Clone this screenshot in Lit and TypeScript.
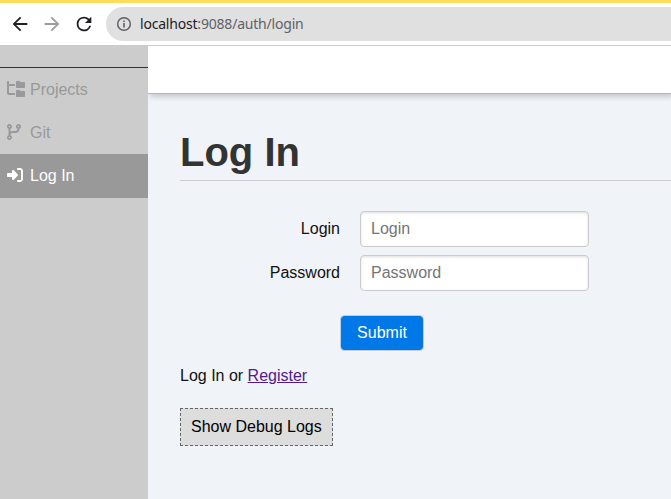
import { LitElement, html, css, svg } from "lit";
import { customElement } from "lit/decorators.js";
import { classMap } from "lit/directives/class-map.js";

const folderTree = svg`<path d="M64 32C64 14.3 49.7 0 32 0S0 14.3 0 32v96V384c0 35.3 28.7 64 64 64H256V384H64V160H256V96H64V32zM288 192c0 17.7 14.3 32 32 32H544c17.7 0 32-14.3 32-32V64c0-17.7-14.3-32-32-32H445.3c-8.5 0-16.6-3.4-22.6-9.4L409.4 9.4c-6-6-14.1-9.4-22.6-9.4H320c-17.7 0-32 14.3-32 32V192zm0 288c0 17.7 14.3 32 32 32H544c17.7 0 32-14.3 32-32V352c0-17.7-14.3-32-32-32H445.3c-8.5 0-16.6-3.4-22.6-9.4l-13.3-13.3c-6-6-14.1-9.4-22.6-9.4H320c-17.7 0-32 14.3-32 32V480z"/>`;
const codeBranch = svg`<path d="M80 104a24 24 0 1 0 0-48 24 24 0 1 0 0 48zm80-24c0 32.8-19.7 61-48 73.3v87.8c18.8-10.9 40.7-17.1 64-17.1h96c35.3 0 64-28.7 64-64v-6.7C307.7 141 288 112.8 288 80c0-44.2 35.8-80 80-80s80 35.8 80 80c0 32.8-19.7 61-48 73.3V160c0 70.7-57.3 128-128 128H176c-35.3 0-64 28.7-64 64v6.7c28.3 12.3 48 40.5 48 73.3c0 44.2-35.8 80-80 80s-80-35.8-80-80c0-32.8 19.7-61 48-73.3V352 153.3C19.7 141 0 112.8 0 80C0 35.8 35.8 0 80 0s80 35.8 80 80zm232 0a24 24 0 1 0 -48 0 24 24 0 1 0 48 0zM80 456a24 24 0 1 0 0-48 24 24 0 1 0 0 48z"/>`;
const signIn = svg`<path d="M217.9 105.9L340.7 228.7c7.2 7.2 11.3 17.1 11.3 27.3s-4.1 20.1-11.3 27.3L217.9 406.1c-6.4 6.4-15 9.9-24 9.9c-18.7 0-33.9-15.2-33.9-33.9l0-62.1L32 320c-17.7 0-32-14.3-32-32l0-64c0-17.7 14.3-32 32-32l128 0 0-62.1c0-18.7 15.2-33.9 33.9-33.9c9 0 17.6 3.6 24 9.9zM352 416l64 0c17.7 0 32-14.3 32-32l0-256c0-17.7-14.3-32-32-32l-64 0c-17.7 0-32-14.3-32-32s14.3-32 32-32l64 0c53 0 96 43 96 96l0 256c0 53-43 96-96 96l-64 0c-17.7 0-32-14.3-32-32s14.3-32 32-32z"/>`;

@customElement("browser-bar")
class BrowserBar extends LitElement {
  static styles = css`
    :host {
      display: flex;
      align-items: center;
      box-sizing: border-box;
      height: 46px;
      flex: none;
      border-top: 3px solid #ffdc5c;
      border-bottom: 1px solid #cbcbcb;
      background: #fff;
      padding: 0 0 1px 9px;
      color: #1f2023;
    }
    .nav {
      width: 22px;
      height: 22px;
      margin-right: 10px;
      fill: currentColor;
      flex: none;
    }
    .off {
      color: #9c9c9e;
    }
    .address {
      flex: 1;
      display: flex;
      align-items: center;
      box-sizing: border-box;
      height: 34px;
      margin-left: 1px;
      padding-left: 10px;
      border-radius: 17px 0 0 17px;
      background: #e0e0e0;
      font: 14px/20px "Noto Sans", sans-serif;
      white-space: nowrap;
    }
    .info {
      width: 16px;
      height: 16px;
      margin-right: 8px;
      fill: #5c5e62;
      flex: none;
    }
    .url {
      letter-spacing: -0.2px;
    }
    .path {
      color: #5f6165;
    }
  `;
  render() {
    return html`
      <svg class="nav" viewBox="0 0 24 24"><path d="M20 10.8H7.83l5.59-5.39L12 4l-8 8 8 8 1.41-1.41L7.83 13.2H20z" /></svg>
      <svg class="nav off" viewBox="0 0 24 24"><path d="M12 4l-1.41 1.41L16.17 10.8H4v2.4h12.17l-5.58 5.39L12 20l8-8z" /></svg>
      <svg class="nav" viewBox="0 0 24 24">
        <path d="M17.65 6.35A7.96 7.96 0 0 0 12 4a8 8 0 1 0 7.73 10h-2.08A6 6 0 1 1 12 6c1.66 0 3.14.69 4.22 1.78L13 11h7V4z" />
      </svg>
      <div class="address">
        <svg class="info" viewBox="0 0 24 24">
          <path d="M10.8 6.6h2.4v2.4h-2.4zm0 4h2.4v6.8h-2.4zm1.2-9.2a10.6 10.6 0 1 0 0 21.2 10.6 10.6 0 0 0 0-21.2zm0 19a8.4 8.4 0 1 1 0-16.8 8.4 8.4 0 0 1 0 16.8z" />
        </svg>
        <span class="url">localhost<span class="path">:9088/auth/login</span></span>
      </div>
    `;
  }
}

@customElement("side-menu")
class SideMenu extends LitElement {
  static styles = css`
    :host {
      display: block;
      width: 148px;
      flex: none;
      background: #ccc;
    }
    .top {
      height: 21px;
      border-bottom: 1px solid #333;
    }
    .item {
      display: flex;
      align-items: center;
      box-sizing: border-box;
      height: 43.2px;
      padding-left: 7px;
      color: #999;
    }
    .active {
      background: #999;
      color: #fff;
    }
    .slot {
      width: 23px;
      height: 16px;
      margin-top: -1.2px;
      flex: none;
    }
    .icon {
      display: block;
      height: 16px;
      fill: currentColor;
    }
  `;
  render() {
    const items = [
      { label: "Projects", icon: folderTree, width: 576 },
      { label: "Git", icon: codeBranch, width: 448 },
      { label: "Log In", icon: signIn, width: 512, active: true },
    ];
    return html`
      <div class="top"></div>
      ${items.map(
        (i) => html`<div class=${classMap({ item: true, active: !!i.active })}>
          <span class="slot"><svg class="icon" viewBox="0 0 ${i.width} 512">${i.icon}</svg></span>
          <span>${i.label}</span>
        </div>`
      )}
    `;
  }
}

@customElement("login-page")
class LoginPage extends LitElement {
  static styles = css`
    :host {
      display: flex;
      flex-direction: column;
      flex: 1;
      min-width: 0;
    }
    .header {
      height: 47px;
      flex: none;
      background: #fff;
      border-bottom: 1px solid #b4b6b8;
      box-shadow: 2px 3px 5px rgba(0, 0, 0, 0.18);
      clip-path: inset(0 0 -12px 0);
    }
    .content {
      padding: 32px 0 0 32px;
    }
    .title {
      margin: 0 0 30px;
      padding-bottom: 2px;
      height: 52px;
      border-bottom: 1px solid #ccc;
      font-size: 40px;
      line-height: 53px;
      color: #333;
    }
    .row {
      display: flex;
      align-items: center;
      gap: 20px;
      height: 36px;
      margin-bottom: 8px;
    }
    .label {
      width: 160px;
      text-align: right;
    }
    .field {
      box-sizing: border-box;
      width: 229px;
      height: 36px;
      padding: 0 10px;
      border: 1px solid #ccc;
      border-radius: 4px;
      box-shadow: inset 0 1px 3px #ddd;
      background: #fff;
      font: inherit;
    }
    .field::placeholder {
      color: #757575;
    }
    .submit {
      display: block;
      box-sizing: border-box;
      width: 84px;
      height: 36px;
      margin: 24px 0 16px 160px;
      padding: 0;
      border: 1px solid #c4ccd0;
      border-radius: 4px;
      background: #0078e7;
      background-clip: padding-box;
      color: #fff;
      font: inherit;
    }
    .alt {
      margin: 0 0 23px;
      line-height: 18px;
    }
    .link {
      color: #551a8b;
      text-decoration: underline;
    }
    .debug {
      display: inline-block;
      padding: 9px 10px;
      line-height: 18px;
      border: 1px dashed #666;
      background: #ddd;
      color: #000;
    }
  `;
  render() {
    return html`
      <div class="header"></div>
      <div class="content">
        <h1 class="title">Log In</h1>
        <div class="row"><span class="label">Login</span><input class="field" placeholder="Login" /></div>
        <div class="row"><span class="label">Password</span><input class="field" type="password" placeholder="Password" /></div>
        <button class="submit">Submit</button>
        <p class="alt">Log In or <a class="link">Register</a></p>
        <div class="debug">Show Debug Logs</div>
      </div>
    `;
  }
}

@customElement("app-root")
class AppRoot extends LitElement {
  static styles = css`
    :host {
      display: flex;
      flex-direction: column;
      height: 100vh;
      overflow: hidden;
      background: #f0f4f9;
      color: #111;
      font: 16px/18px "Liberation Sans", Arial, sans-serif;
    }
    .body {
      display: flex;
      flex: 1;
      min-height: 0;
    }
  `;
  render() {
    return html`
      <browser-bar></browser-bar>
      <div class="body">
        <side-menu></side-menu>
        <login-page></login-page>
      </div>
    `;
  }
}
